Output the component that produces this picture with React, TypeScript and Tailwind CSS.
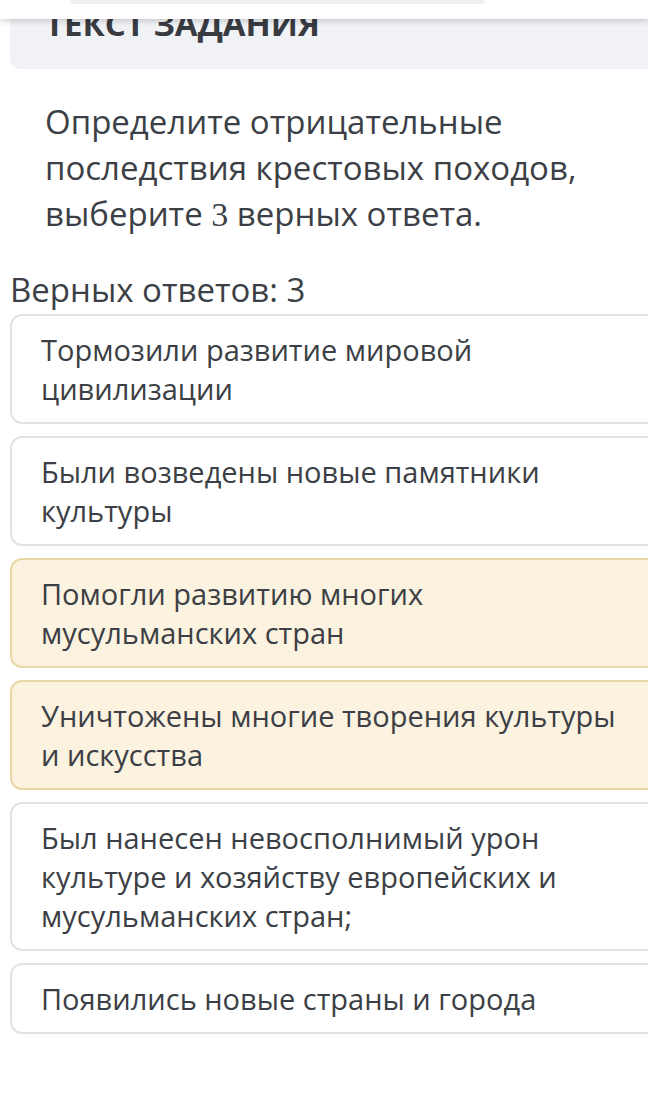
const answers = [
  { id: 1, text: "Тормозили развитие мировой цивилизации", picked: false },
  { id: 2, text: "Были возведены новые памятники культуры", picked: false },
  { id: 3, text: "Помогли развитию многих мусульманских стран", picked: true },
  { id: 4, text: "Уничтожены многие творения культуры и искусства", picked: true },
  { id: 5, text: "Был нанесен невосполнимый урон культуре и хозяйству европейских и мусульманских стран;", picked: false },
  { id: 6, text: "Появились новые страны и города", picked: false },
]

export default function App() {
  return (
    <div className="relative w-[648px] h-[1118px] overflow-hidden bg-white text-[#3c3f45] font-['Open_Sans',sans-serif]">
      {/* top bar, scrolled so only its bottom shows */}
      <div className="absolute top-0 left-0 right-0 h-[19px] bg-white shadow-[0_2px_6px_rgba(0,0,0,0.18)] z-10">
        <div className="ml-[70px] w-[415px] h-[4px] rounded-b-full bg-[#efeff1]" />
      </div>

      <div className="pl-[10px]">
        <div className="w-[660px] h-[69px] rounded-bl-[10px] bg-[#f1f2f6] pl-[35px] pt-[3px]">
          <div className="text-[33px] font-bold leading-[42px] uppercase text-[#383b42]">Текст задания</div>
        </div>

        <p className="mt-[30px] pl-[35px] w-[620px] text-[33px] leading-[46px]">
          Определите отрицательные последствия крестовых походов, выберите{" "}
          <span className="font-['Liberation_Serif',serif] text-[34px]">3</span> верных ответа.
        </p>

        <div className="mt-[31px] text-[33px] leading-[42px]">Верных ответов: 3</div>

        <div className="mt-[3px] flex flex-col gap-[12px]">
          {answers.map((a) => (
            <div
              key={a.id}
              className={
                a.picked
                  ? "w-[660px] rounded-l-[12px] border-2 border-[#ead7a6] bg-[#fbf2df] pl-[29px] pr-[40px] py-[14px]"
                  : "w-[660px] rounded-l-[12px] border-2 border-[#e3e3e3] bg-white pl-[29px] pr-[40px] py-[14px]"
              }
            >
              <div className="max-w-[585px] text-[29px] leading-[39px]">{a.text}</div>
            </div>
          ))}
        </div>
      </div>
    </div>
  )
}
